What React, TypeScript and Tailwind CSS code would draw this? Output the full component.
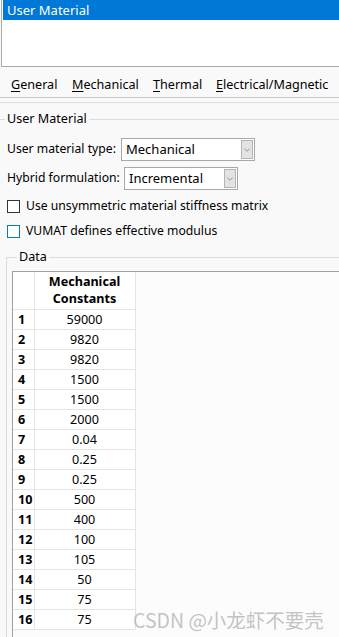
import { ChevronDown } from 'lucide-react';

const values = ['59000', '9820', '9820', '1500', '1500', '2000', '0.04', '0.25', '0.25', '500', '400', '100', '105', '50', '75', '75'];

const font = { fontFamily: '"Noto Sans", "Noto Sans CJK SC", sans-serif' };

function Select({ value, width }: { value: string; width: string }) {
  return (
    <div className={`${width} flex h-[23px] shrink-0 items-stretch border border-[#a8a8a8] bg-white p-px`}>
      <span className="flex-1 pl-[3px] text-[13px] leading-[19px]">{value}</span>
      <span className="flex w-[12px] items-center justify-center border border-[#b4b4b4] bg-[#e3e3e3]">
        <ChevronDown className="h-[10px] w-[10px] text-[#606060]" strokeWidth={1.5} />
      </span>
    </div>
  );
}

function Tab({ label, width }: { label: string; width: string }) {
  return (
    <span className={`${width} shrink-0 whitespace-nowrap`}>
      <span className="underline underline-offset-2">{label[0]}</span>
      {label.slice(1)}
    </span>
  );
}

export default function App() {
  return (
    <div className="relative h-[637px] w-[339px] overflow-hidden bg-[#f9f9f9] text-[12.2px] text-black" style={font}>
      {/* material list */}
      <div className="ml-px h-[67px] border-b border-l border-[#ababab] bg-white pl-px">
        <div className="h-[20px] bg-[#0078d7] pl-1 text-[13px] leading-[20px] text-white">User Material</div>
      </div>

      {/* tabs */}
      <div className="flex h-[31px] items-center border-b border-[#c8c8c8] pl-[11px] pt-[7px] text-[12.6px]">
        <Tab label="General" width="w-[61px]" />
        <Tab label="Mechanical" width="w-[81px]" />
        <Tab label="Thermal" width="w-[63px]" />
        <Tab label="Electrical/Magnetic" width="" />
      </div>
      <div className="mt-[4px] border-t border-[#dedede]" />

      {/* user material group */}
      <div className="mt-[7px] flex h-[18px] items-center">
        <span className="h-px w-[5px] bg-[#dcdcdc]" />
        <span className="whitespace-nowrap px-[2px] text-[12.6px]">User Material</span>
        <span className="h-px flex-1 bg-[#dcdcdc]" />
      </div>
      <div className="mt-[10px] flex items-center pl-[7px]">
        <span className="w-[114px] shrink-0 whitespace-nowrap">User material type:</span>
        <Select value="Mechanical" width="w-[134px]" />
      </div>
      <div className="mt-[6px] flex items-center pl-[7px]">
        <span className="w-[117px] shrink-0 whitespace-nowrap">Hybrid formulation:</span>
        <Select value="Incremental" width="w-[114px]" />
      </div>
      <div className="mt-[7px] flex items-center gap-[6px] pl-[7px]">
        <span className="h-[13px] w-[13px] shrink-0 border border-[#333] bg-white" />
        <span className="whitespace-nowrap">Use unsymmetric material stiffness matrix</span>
      </div>
      <div className="mt-[7px] flex items-center gap-[6px] pl-[7px]">
        <span className="h-[13px] w-[13px] shrink-0 border border-[#0078d7] bg-white" />
        <span className="whitespace-nowrap">VUMAT defines effective modulus</span>
      </div>

      {/* data group */}
      <div className="ml-[6px] mt-[16px] h-[400px] border-l border-t border-[#dcdcdc]">
        <div className="-mt-[10px] flex">
          <span className="ml-[10px] bg-[#f9f9f9] px-[2px] text-[12.6px] leading-[18px]">Data</span>
        </div>
        <div className="ml-[5px] mt-[5px] h-[400px] border-l border-t border-[#a0a0a0] bg-[#fcfcfc]">
          <table className="border-collapse bg-white text-[12.6px]">
            <thead>
              <tr className="h-[38px]">
                <th className="w-[21px] border-b border-r border-[#e4e4e4] p-0" />
                <th className="w-[101px] border-b border-r border-[#e4e4e4] p-0 text-center leading-[17px] font-bold">
                  Mechanical
                  <br />
                  Constants
                </th>
              </tr>
            </thead>
            <tbody>
              {values.map((v, i) => (
                <tr key={i} className="h-[20px]">
                  <td className="border-b border-r border-[#e4e4e4] p-0 pl-[5px] leading-[19px] font-bold">{i + 1}</td>
                  <td className="border-b border-r border-[#e4e4e4] p-0 text-center leading-[19px]">{v}</td>
                </tr>
              ))}
            </tbody>
          </table>
        </div>
      </div>

      <div
        className="pointer-events-none absolute left-[133px] top-[607px] whitespace-nowrap text-[19.5px] leading-[26px] text-[#b4b4b4]/80"
        style={{ fontFamily: '"Noto Sans CJK SC", sans-serif' }}
      >
        CSDN @小龙虾不要壳
      </div>
    </div>
  );
}
